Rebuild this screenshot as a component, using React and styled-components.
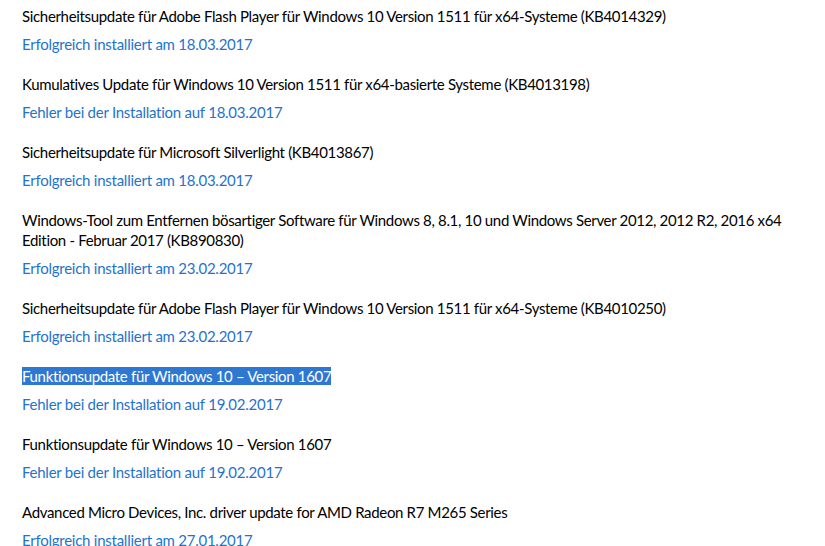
import React from "react";
import styled, { createGlobalStyle } from "styled-components";

const GlobalStyle = createGlobalStyle`
  html, body {
    margin: 0;
    padding: 0;
    background: #ffffff;
    overflow: hidden;
  }
`;

const updates = [
  {
    title:
      "Sicherheitsupdate für Adobe Flash Player für Windows 10 Version 1511 für x64-Systeme (KB4014329)",
    status: "Erfolgreich installiert am 18.03.2017",
  },
  {
    title:
      "Kumulatives Update für Windows 10 Version 1511 für x64-basierte Systeme (KB4013198)",
    status: "Fehler bei der Installation auf 18.03.2017",
  },
  {
    title: "Sicherheitsupdate für Microsoft Silverlight (KB4013867)",
    status: "Erfolgreich installiert am 18.03.2017",
  },
  {
    title:
      "Windows-Tool zum Entfernen bösartiger Software für Windows 8, 8.1, 10 und Windows Server 2012, 2012 R2, 2016 x64 Edition - Februar 2017 (KB890830)",
    status: "Erfolgreich installiert am 23.02.2017",
  },
  {
    title:
      "Sicherheitsupdate für Adobe Flash Player für Windows 10 Version 1511 für x64-Systeme (KB4010250)",
    status: "Erfolgreich installiert am 23.02.2017",
  },
  {
    title: "Funktionsupdate für Windows 10 – Version 1607",
    status: "Fehler bei der Installation auf 19.02.2017",
    selected: true,
  },
  {
    title: "Funktionsupdate für Windows 10 – Version 1607",
    status: "Fehler bei der Installation auf 19.02.2017",
  },
  {
    title:
      "Advanced Micro Devices, Inc. driver update for AMD Radeon R7 M265 Series",
    status: "Erfolgreich installiert am 27.01.2017",
  },
];

const App = () => {
  return (
    <>
      <GlobalStyle />
      <HistoryList>
        {updates.map((u, i) => (
          <UpdateItem key={i}>
            <UpdateTitle>
              <TitleText $selected={u.selected}>{u.title}</TitleText>
            </UpdateTitle>
            <StatusLink href="#">{u.status}</StatusLink>
          </UpdateItem>
        ))}
      </HistoryList>
    </>
  );
};

const HistoryList = styled.div`
  display: flex;
  flex-direction: column;
  gap: 20px;
  padding: 6px 0 0 22px;
  width: 780px;
  font-family: "Lato", "Segoe UI", sans-serif;
  font-size: 15px;
  line-height: 20px;
  letter-spacing: -0.33px;
`;

const UpdateItem = styled.div`
  display: flex;
  flex-direction: column;
  align-items: flex-start;
  gap: 8px;
`;

const UpdateTitle = styled.div`
  color: #000000;
`;

const TitleText = styled.span`
  background: ${(p) => (p.$selected ? "#2f78d1" : "transparent")};
  color: ${(p) => (p.$selected ? "#ffffff" : "#000000")};
`;

const StatusLink = styled.a`
  color: #1f73cc;
  text-decoration: none;
  letter-spacing: -0.25px;
`;

export default App;
